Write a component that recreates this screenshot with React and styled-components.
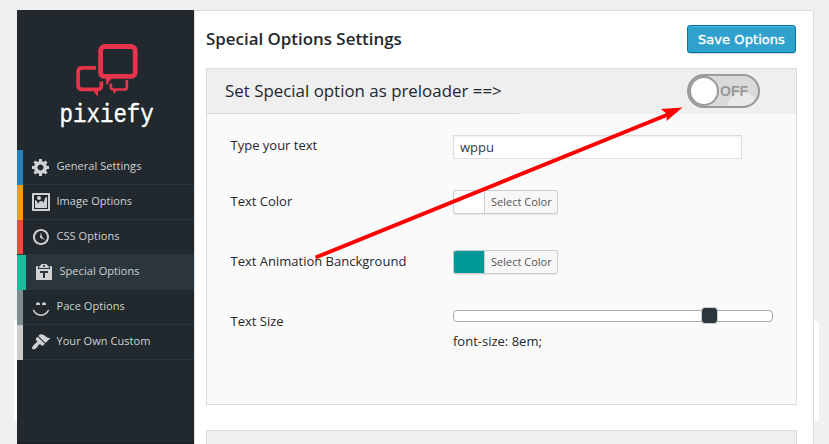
import React from "react";
import styled, { createGlobalStyle } from "styled-components";

const GlobalStyle = createGlobalStyle`
  * { box-sizing: border-box; }
  body {
    margin: 0;
    background: #f0f0f0;
    color: #23282d;
    font-family: "Open Sans", sans-serif;
    overflow: hidden;
  }
`;

const Page = styled.div`
  position: relative;
  height: 444px;
  padding: 10px 15px 0 17px;
  overflow: hidden;
`;

const Backdrop = styled.div`
  position: absolute;
  left: 14px;
  right: 10px;
  top: 321px;
  height: 100px;
  background: #fff;
`;

const Shell = styled.div`
  position: relative;
  display: flex;
  height: 434px;
`;

const Sidebar = styled.aside`
  width: 177px;
  flex: none;
  background: #21292e;
  border-bottom: 2px solid #182026;
`;

const Brand = styled.div`
  height: 140px;
`;

const MenuItem = styled.a`
  display: flex;
  align-items: center;
  height: 35px;
  padding-left: 8px;
  border-left: ${(p) => (p.$active ? 9 : 6)}px solid ${(p) => p.$accent};
  box-shadow: inset 0 -1px #2a363b${(p) => (p.$active ? ", 0 -1px #2a363b" : "")};
  background: ${(p) => (p.$active ? "#2a363b" : "transparent")};
  color: #d0d2d3;
  font-size: 11px;
  line-height: 15px;
  letter-spacing: 0.05px;
  white-space: nowrap;

  svg {
    flex: none;
    margin: 0 5.5px 1px 0;
    fill: #d0d2d3;
  }
  span {
    margin-top: -5px;
  }
`;

const Content = styled.main`
  flex: 1;
  background: #fff;
  border: solid #dcdcdc;
  border-width: 1px 1px 0 1px;
  padding: 0 16px 0 11px;
`;

const TitleBar = styled.header`
  display: flex;
  justify-content: space-between;
  height: 57px;
  padding-top: 14px;
`;

const Title = styled.h1`
  margin: 3px 0 0;
  font-size: 16.9px;
  line-height: 22px;
  font-weight: 600;
  white-space: nowrap;
`;

const SaveButton = styled.button`
  width: 109px;
  height: 28px;
  margin-right: 1px;
  padding: 1px 0 0;
  border: 1px solid #0074a2;
  border-radius: 3px;
  background: #2ea2cc;
  box-shadow: inset 0 1px rgba(120, 200, 230, 0.5), 0 1px rgba(0, 0, 0, 0.15);
  color: #fff;
  font: 13px/24px "DejaVu Sans", sans-serif;
  letter-spacing: 0.06px;
  -webkit-text-stroke: 0.35px #fff;
  white-space: nowrap;
`;

const Panel = styled.section`
  height: 337px;
  border: 1px solid #dcdcdc;
  background: #fafafa;
  margin-bottom: 25px;
`;

const PanelHeader = styled.div`
  display: flex;
  justify-content: space-between;
  height: 45px;
  padding: 5px 36px 0 18px;
  background: linear-gradient(#dcdcdc, #dcdcdc) 0 100% / 312px 1px no-repeat #efefef;
`;

const PanelTitle = styled.h2`
  margin: 4px 0 0;
  font-size: 16.9px;
  line-height: 26px;
  font-weight: 400;
  white-space: nowrap;
`;

const Toggle = styled.div`
  display: flex;
  align-items: center;
  width: 73px;
  height: 34px;
  border: 2px solid #999;
  border-radius: 17px;
  background: radial-gradient(circle at 54px 32px, #e9e9e9 0 15px, #dadada 16px);
  color: #999;
  font: bold 14px/30px "Liberation Sans", sans-serif;
`;

const Knob = styled.i`
  width: 30px;
  height: 30px;
  margin-right: 1px;
  border: 2px solid #999;
  border-radius: 50%;
  background: #fff;
`;

const Fields = styled.div`
  padding: 21px 0 0 23.5px;
`;

const Field = styled.div`
  display: flex;
  height: ${(p) => p.$height}px;
`;

const Label = styled.label`
  width: 222.5px;
  font-size: 13px;
  line-height: 22px;
  white-space: nowrap;

  ${Field}:first-child > & {
    margin-top: -1px;
  }
`;

const TextInput = styled.input`
  display: block;
  width: 289px;
  height: 24px;
  padding: 0 6px;
  border: 1px solid #ddd;
  outline: 0;
  background: #fff;
  box-shadow: inset 0 1px 2px rgba(0, 0, 0, 0.07);
  color: #32373c;
  font: 13px "Open Sans", sans-serif;
`;

const ColorButton = styled.div`
  width: 105px;
  height: 24px;
  border: 1px solid #ccc;
  border-left: 0;
  border-radius: 3px;
  box-shadow: 0 1px rgba(0, 0, 0, 0.08), inset 1px 0 #ccc;
  background: linear-gradient(#ccc, #ccc) 31px 0 / 1px 100% no-repeat,
    linear-gradient(${(p) => p.$color}, ${(p) => p.$color}) 0 0 / 31px 100% no-repeat #f7f7f7;
  padding-left: 38px;
  color: #555;
  font-size: 11px;
  line-height: 22px;
  white-space: nowrap;
`;

const Track = styled.div`
  display: flex;
  align-items: center;
  width: 320px;
  height: 12px;
  border: 1px solid #aaa;
  border-radius: 4px;
  background: #fff;
`;

const Handle = styled.i`
  width: 17px;
  height: 17px;
  flex: none;
  margin: -1px 0 0 247px;
  border: 1px solid #ccc;
  border-radius: 4px;
  background: #2a363b;
`;

const SizeValue = styled.p`
  margin: 8px 0 0;
  font-size: 13px;
  line-height: 22px;
`;

const Arrow = styled.svg`
  position: absolute;
  left: 0;
  top: 0;
`;

const MENU = [
  {
    label: "General Settings",
    accent: "#2980b9",
    icon: "M18 12h-2.18c-.17.7-.44 1.35-.81 1.93l1.54 1.54-2.1 2.1-1.54-1.54c-.58.36-1.23.63-1.91.79V19H8v-2.18c-.68-.16-1.33-.43-1.91-.79l-1.54 1.54-2.12-2.12 1.54-1.54c-.36-.58-.63-1.23-.79-1.91H1V9.03h2.17c.16-.7.44-1.35.8-1.94L2.43 5.55l2.1-2.1 1.54 1.54c.58-.37 1.24-.64 1.93-.81V2h3v2.18c.68.16 1.33.43 1.91.79l1.54-1.54 2.12 2.12-1.54 1.54c.36.59.64 1.24.8 1.94H18V12zm-8.5 1.5c1.66 0 3-1.34 3-3s-1.34-3-3-3-3 1.34-3 3 1.34 3 3 3z",
  },
  {
    label: "Image Options",
    accent: "#f39c12",
    icon: "M2.25 1h15.5c.69 0 1.25.56 1.25 1.25v15.5c0 .69-.56 1.25-1.25 1.25H2.25C1.56 19 1 18.44 1 17.75V2.25C1 1.56 1.56 1 2.25 1zM17 17V3H3v14h14zM10 6c0-1.1-.9-2-2-2s-2 .9-2 2 .9 2 2 2 2-.9 2-2zm3 5s0-6 3-6v10c0 .55-.45 1-1 1H5c-.55 0-1-.45-1-1V8c2 0 3 4 3 4s1-3 3-3 3 2 3 2z",
  },
  {
    label: "CSS Options",
    accent: "#e74c3c",
    icon: "M10 2c4.42 0 8 3.58 8 8s-3.58 8-8 8-8-3.58-8-8 3.58-8 8-8zm0 14c3.31 0 6-2.69 6-6s-2.69-6-6-6-6 2.69-6 6 2.69 6 6 6zm-.71-5.29c.07.05.14.1.23.15l-.02.02L14 13l-3.03-3.19L10 5l-.97 4.81h.01c0 .02-.01.05-.02.09S9 9.97 9 10c0 .28.1.52.29.71z",
  },
  {
    label: "Special Options",
    accent: "#1abc9c",
    active: true,
    icon: "M12.38 2L15 5v1H5V5l2.64-3h4.74zM10 5c.55 0 1-.44 1-1 0-.55-.45-1-1-1s-1 .45-1 1c0 .56.45 1 1 1zm5.45-1H17c.55 0 1 .45 1 1v12c0 .56-.45 1-1 1H3c-.55 0-1-.44-1-1V5c0-.55.45-1 1-1h1.55L4 4.63V7h12V4.63zM14 11V9H6v2h3v5h2v-5h3z",
  },
  {
    label: "Pace Options",
    accent: "#7f8c8d",
    icon: "M7 5.2c1.1 0 2 .89 2 2 0 .37-.11.71-.28 1C8.72 8.2 8 8 7 8s-1.72.2-1.72.2c-.17-.29-.28-.63-.28-1 0-1.11.9-2 2-2zm6 0c1.11 0 2 .89 2 2 0 .37-.11.71-.28 1 0 0-.72-.2-1.72-.2s-1.72.2-1.72.2c-.17-.29-.28-.63-.28-1 0-1.11.89-2 2-2zm-3 13.7c3.72 0 7.03-2.36 8.23-5.88l-1.32-.46C15.9 15.52 13.12 17.5 10 17.5s-5.9-1.98-6.91-4.94l-1.32.46c1.2 3.52 4.51 5.88 8.23 5.88z",
  },
  {
    label: "Your Own Custom",
    accent: "#cccccc",
    icon: "M14.48 11.06L7.41 3.99l1.5-1.5c.5-.56 2.3-.47 3.51.32 1.21.8 1.43 1.28 2.91 2.1 1.18.64 2.45 1.26 4.45.85zm-.71.71L6.7 4.7 4.93 6.47c-.39.39-.39 1.02 0 1.41l1.06 1.06c.39.39.39 1.03 0 1.42-.6.6-1.43 1.11-2.21 1.69-.35.26-.7.53-1.01.84C1.43 14.23.4 16.08 1.4 17.07c.99 1 2.84-.03 4.18-1.36.31-.31.58-.66.85-1.02.57-.78 1.08-1.61 1.69-2.21.39-.39 1.02-.39 1.41 0l1.06 1.06c.39.39 1.02.39 1.41 0z",
  },
];

function Logo() {
  return (
    <svg width="177" height="140" viewBox="17 10 177 140">
      <g fill="none" stroke="#e5344b">
        <rect x="100.600" y="46.500" width="34.600" height="29.900" rx="4" strokeWidth="4.800" />
        <path d="M96 67.800H82q-3.900 0-3.900 3.900V85.500q0 3.900 3.900 3.900H97.500q3.900 0 3.900-3.900V81.500" strokeWidth="3.700" />
        <path d="M126.800 80v7.500q0 2-2 2H113.500q-2.700 0-2.700-2.700V83.500" strokeWidth="2.700" />
      </g>
      <g fill="#e5344b">
        <path d="M105.500 77h7l-6 8.500zM93 90.500h5v6.500zM113 90h4.500l-3.700 4z" />
      </g>
      <text
        transform="translate(59.400 121.500) scale(1 1.180)"
        fill="#fff"
        stroke="#fff"
        strokeWidth="0.300"
        fontFamily="Liberation Mono, monospace"
        fontSize="22.500"
      >
        pixiefy
      </text>
    </svg>
  );
}

export default function App() {
  return (
    <Page>
      <GlobalStyle />
      <Backdrop />
      <Shell>
        <Sidebar>
          <Brand>
            <Logo />
          </Brand>
          {MENU.map((m) => (
            <MenuItem key={m.label} $accent={m.accent} $active={m.active}>
              <svg width="20" height="20" viewBox="0 0 20 20">
                <path d={m.icon} />
              </svg>
              <span>{m.label}</span>
            </MenuItem>
          ))}
        </Sidebar>
        <Content>
          <TitleBar>
            <Title>Special Options Settings</Title>
            <SaveButton>Save Options</SaveButton>
          </TitleBar>
          <Panel>
            <PanelHeader>
              <PanelTitle>Set Special option as preloader ==&gt;</PanelTitle>
              <Toggle>
                <Knob />
                OFF
              </Toggle>
            </PanelHeader>
            <Fields>
              <Field $height={55}>
                <Label>Type your text</Label>
                <TextInput defaultValue="wppu" />
              </Field>
              <Field $height={60}>
                <Label>Text Color</Label>
                <ColorButton $color="#ffffff">Select Color</ColorButton>
              </Field>
              <Field $height={60}>
                <Label>Text Animation Banckground</Label>
                <ColorButton $color="#009999">Select Color</ColorButton>
              </Field>
              <Field $height={60}>
                <Label>Text Size</Label>
                <div>
                  <Track>
                    <Handle />
                  </Track>
                  <SizeValue>font-size: 8em;</SizeValue>
                </div>
              </Field>
            </Fields>
          </Panel>
          <Panel>
            <PanelHeader />
          </Panel>
        </Content>
      </Shell>
      <Arrow width="829" height="444" viewBox="0 0 829 444">
        <path d="M315.500 257.500L668 114.500" stroke="#f00" strokeWidth="4" />
        <path d="M682.500 107.500L661 109l6 5-0.500 7z" fill="#f00" />
      </Arrow>
    </Page>
  );
}
